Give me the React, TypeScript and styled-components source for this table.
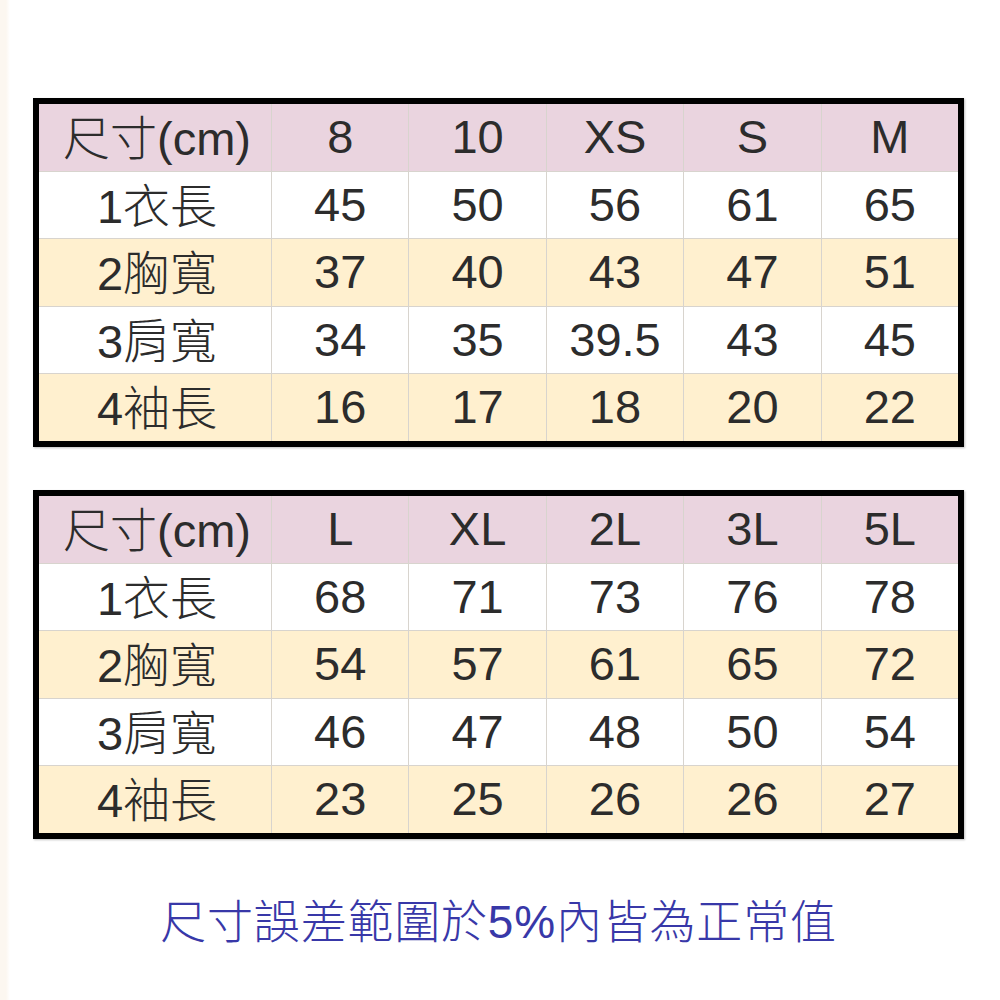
import React from "react";
import styled, { createGlobalStyle } from "styled-components";

const Global = createGlobalStyle`
  html, body { margin: 0; padding: 0; background: #ffffff; }
  body { font-family: "Liberation Sans", "Noto Sans CJK TC", sans-serif; }
`;

const Page = styled.div`
  width: 1000px;
  height: 1000px;
  box-sizing: border-box;
  padding: 98px 0 0 33px;
  display: flex;
  flex-direction: column;
  background: linear-gradient(to right, #fcf7f0 0, #fcf7f0 6px, #ffffff 10px);
`;

const Tables = styled.div`
  display: flex;
  flex-direction: column;
  gap: 43px;
  width: 931px;
`;

const Grid = styled.div`
  box-sizing: border-box;
  width: 931px;
  height: 349px;
  border: 6px solid #000;
  display: grid;
  grid-template-columns: 232px repeat(5, minmax(0, 1fr));
  grid-template-rows: repeat(5, minmax(0, 1fr));
  gap: 1px;
  background: #d8d4ce;
  box-shadow: 1px 1px 2px rgba(0, 0, 0, 0.25);
`;

const Cell = styled.div<{ $tone: "head" | "white" | "yellow" }>`
  min-height: 0;
  display: flex;
  align-items: center;
  justify-content: center;
  font-family: "Liberation Sans", sans-serif;
  font-weight: 400;
  font-size: 47px;
  line-height: 1.2;
  color: #2c2c2c;
  background: ${(p) =>
    p.$tone === "head" ? "#ead4df" : p.$tone === "yellow" ? "#fff0cf" : "#ffffff"};
`;

const Label = styled.span`
  display: flex;
  align-items: baseline;
  padding-left: 4px;
`;

const Han = styled.span`
  font-family: "Noto Sans CJK TC", sans-serif;
  font-weight: 300;
  line-height: 1.2;
`;

const Note = styled.div`
  width: 931px;
  margin-top: 52px;
  display: flex;
  justify-content: center;
  align-items: baseline;
  font-family: "Liberation Sans", sans-serif;
  font-weight: 400;
  font-size: 46px;
  color: #3838a8;
  line-height: 56px;
  letter-spacing: 0.8px;
`;

const rowLabels: [string, string][] = [
  ["1", "衣長"],
  ["2", "胸寬"],
  ["3", "肩寬"],
  ["4", "袖長"],
];

type TableData = { sizes: string[]; rows: string[][] };

const tables: TableData[] = [
  {
    sizes: ["8", "10", "XS", "S", "M"],
    rows: [
      ["45", "50", "56", "61", "65"],
      ["37", "40", "43", "47", "51"],
      ["34", "35", "39.5", "43", "45"],
      ["16", "17", "18", "20", "22"],
    ],
  },
  {
    sizes: ["L", "XL", "2L", "3L", "5L"],
    rows: [
      ["68", "71", "73", "76", "78"],
      ["54", "57", "61", "65", "72"],
      ["46", "47", "48", "50", "54"],
      ["23", "25", "26", "26", "27"],
    ],
  },
];

function SizeTable({ data }: { data: TableData }) {
  return (
    <Grid>
      <Cell $tone="head">
        <Label>
          <Han>尺寸</Han>(cm)
        </Label>
      </Cell>
      {data.sizes.map((s) => (
        <Cell key={s} $tone="head">
          {s}
        </Cell>
      ))}
      {data.rows.map((r, i) => {
        const tone = i % 2 === 0 ? "white" : "yellow";
        return (
          <React.Fragment key={i}>
            <Cell $tone={tone}>
              <Label>
                {rowLabels[i][0]}
                <Han>{rowLabels[i][1]}</Han>
              </Label>
            </Cell>
            {r.map((v, j) => (
              <Cell key={j} $tone={tone}>
                {v}
              </Cell>
            ))}
          </React.Fragment>
        );
      })}
    </Grid>
  );
}

export default function App() {
  return (
    <>
      <Global />
      <Page>
        <Tables>
          {tables.map((t, i) => (
            <SizeTable key={i} data={t} />
          ))}
        </Tables>
        <Note>
          <Han>尺寸誤差範圍於</Han>5%<Han>內皆為正常值</Han>
        </Note>
      </Page>
    </>
  );
}
